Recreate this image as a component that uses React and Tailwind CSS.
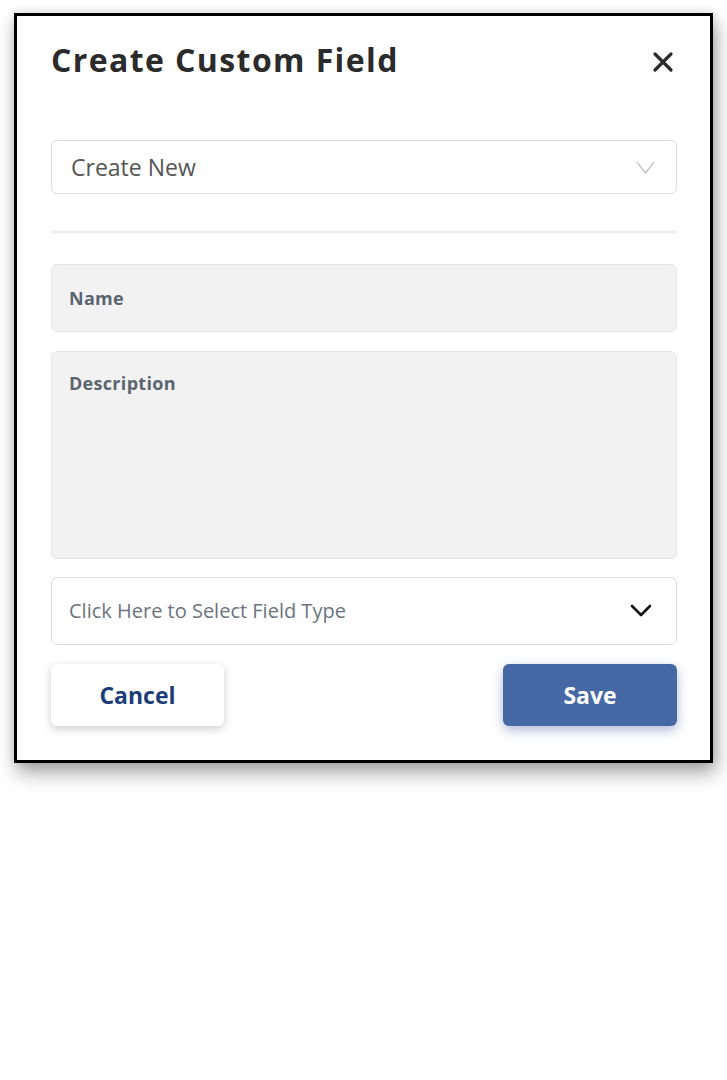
export default function App() {
  return (
    <div className="min-h-[1080px] bg-white pl-[14px] pt-[13px]" style={{ fontFamily: "'Open Sans', Lato, sans-serif" }}>
      <div className="flex h-[750px] w-[699px] flex-col border-[3px] border-black bg-white pl-[34px] pr-[33px] pt-[24px] shadow-[3px_10px_18px_rgba(0,0,0,0.35),0_0_10px_rgba(0,0,0,0.12)]">
        <div className="flex items-start justify-between">
          <h1 className="text-[32px] font-bold leading-[40px] tracking-[1.4px] text-[#2b2b2b]">Create Custom Field</h1>
          <svg className="mr-[3px] mt-[11px]" width="22" height="22" viewBox="0 0 22 22" fill="none" stroke="#2b2b2b" strokeWidth="3.2" strokeLinecap="round">
            <path d="M3 3L19 19M19 3L3 19" />
          </svg>
        </div>

        <div className="mt-[60px] flex h-[54px] items-center justify-between rounded-[6px] border border-[#dcdcdc] pl-[19px] pr-[21px]">
          <span className="text-[23px] text-[#555555]">Create New</span>
          <svg width="19" height="13" viewBox="0 0 19 13" fill="none" stroke="#b5b5b5" strokeWidth="1.2">
            <path d="M1 1L9.5 12L18 1" />
          </svg>
        </div>

        <div className="mt-[37px] h-[2px] bg-[#ececec]" />

        <div className="mt-[31px] flex h-[68px] items-center rounded-[6px] border border-[#e2e6ea] bg-[#f2f2f2] pl-[17px]">
          <span className="text-[18px] font-bold tracking-[0.3px] text-[#5a6570]">Name</span>
        </div>

        <div className="mt-[19px] h-[208px] rounded-[6px] border border-[#e2e6ea] bg-[#f2f2f2] pl-[17px] pt-[19px]">
          <span className="text-[18px] font-bold leading-[24px] tracking-[0.3px] text-[#5a6570]">Description</span>
        </div>

        <div className="mt-[18px] flex h-[68px] items-center justify-between rounded-[6px] border border-[#dcdcdc] pl-[17px] pr-[24px]">
          <span className="text-[20px] text-[#6b7480]">Click Here to Select Field Type</span>
          <svg width="22" height="14" viewBox="0 0 22 14" fill="none" stroke="#111111" strokeWidth="2.6" strokeLinecap="round" strokeLinejoin="round">
            <path d="M2 2L11 11L20 2" />
          </svg>
        </div>

        <div className="mt-[19px] flex items-center justify-between">
          <button className="flex h-[62px] w-[173px] items-center justify-center rounded-[6px] bg-white text-[23px] font-bold text-[#1d3d78] shadow-[0_3px_10px_rgba(0,0,0,0.2)]">
            Cancel
          </button>
          <button className="flex h-[62px] w-[174px] items-center justify-center rounded-[6px] bg-[#4669a5] text-[23px] font-bold text-white shadow-[0_4px_12px_rgba(70,105,165,0.45)]">
            Save
          </button>
        </div>
      </div>
    </div>
  );
}
